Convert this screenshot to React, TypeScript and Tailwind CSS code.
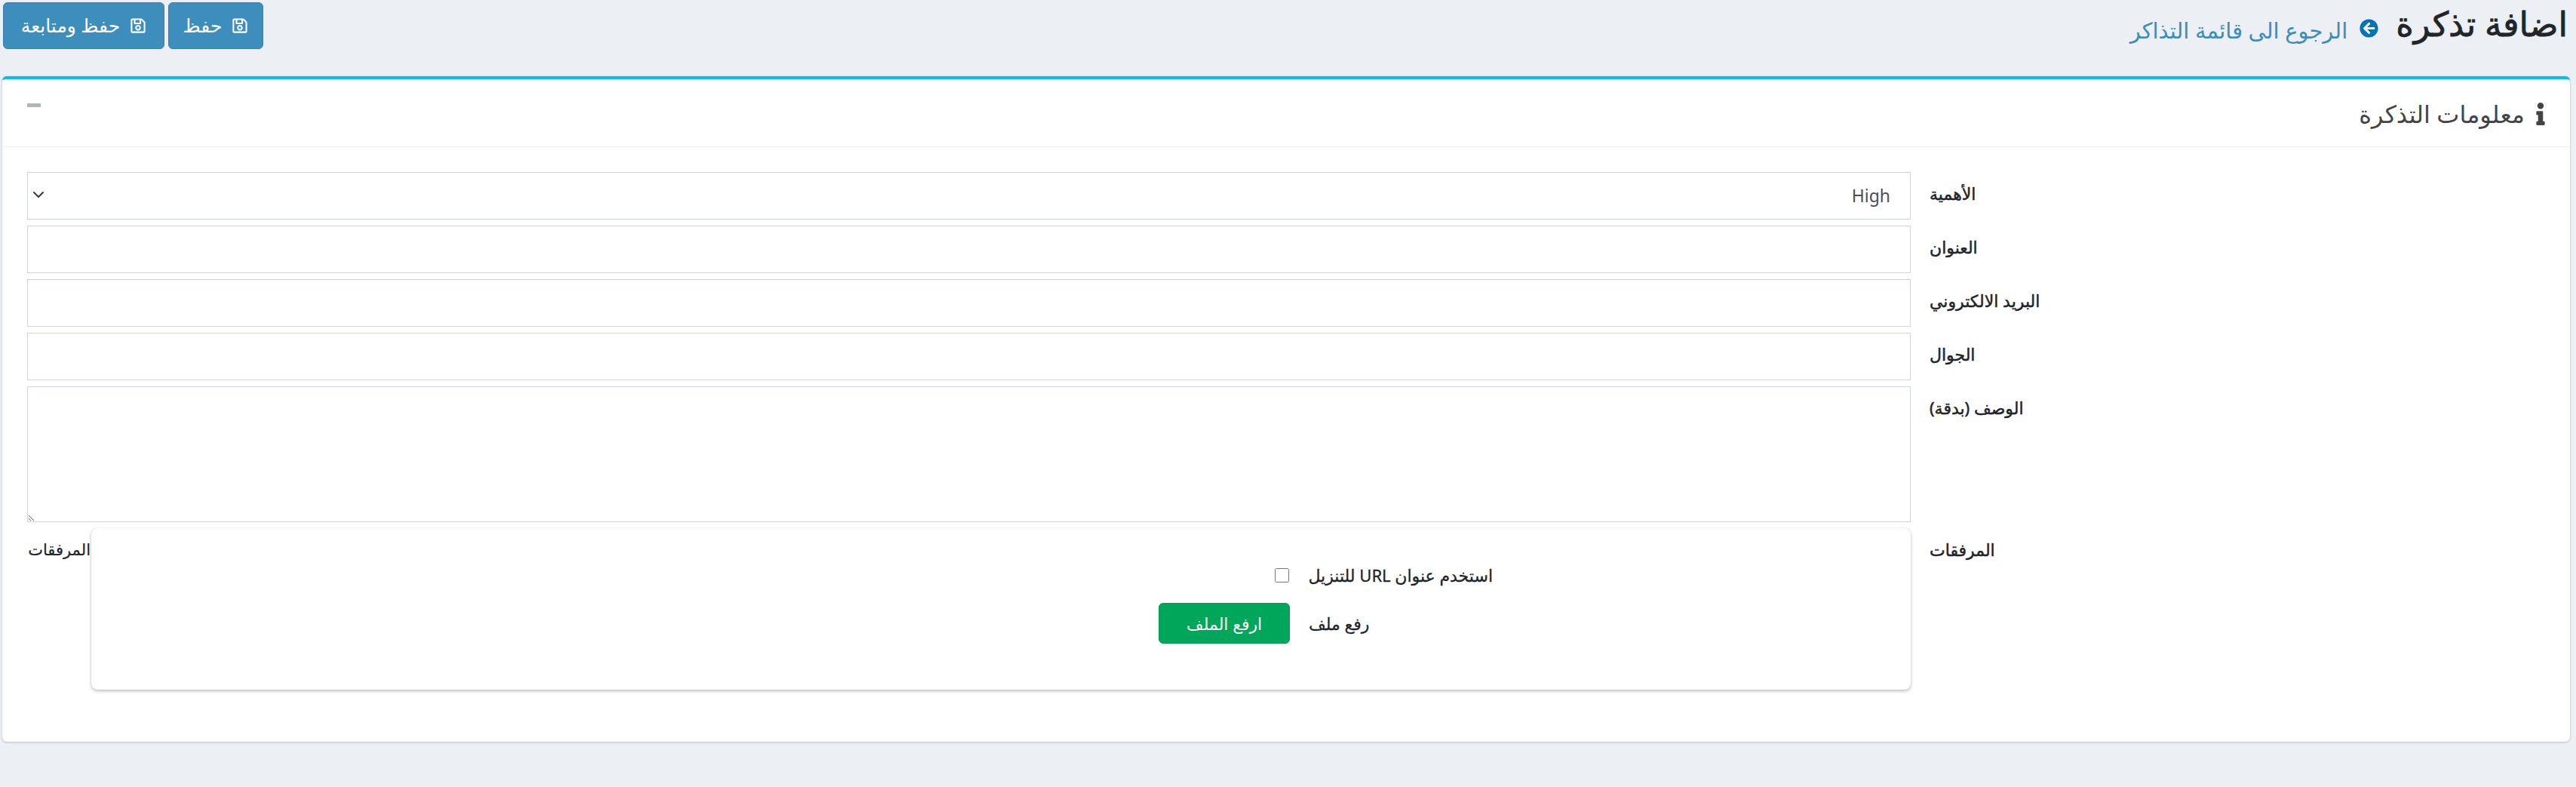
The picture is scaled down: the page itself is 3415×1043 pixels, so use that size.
import { FaArrowCircleLeft, FaInfo, FaRegSave } from "react-icons/fa";

const font = { fontFamily: '"Noto Sans", "Open Sans", "DejaVu Sans", sans-serif' };

function SaveButton({ label, width }: { label: string; width: string }) {
  return (
    <button className={`flex h-[62px] ${width} items-center justify-center gap-[13px] rounded-[6px] border border-[#3a80ab] bg-[#3e8ebd] text-[25px] font-medium text-white`}>
      <FaRegSave className="h-[22px] w-[22px]" />
      <span>{label}</span>
    </button>
  );
}

const labelClass = "w-[849px] shrink-0 pt-[12px] text-left text-[22px] font-normal leading-[32px] text-[#212529] [-webkit-text-stroke:0.5px_#212529]";

function Row({ label, height = "h-[63px]", children }: { label: string; height?: string; children: React.ReactNode }) {
  return (
    <div className="flex items-start">
      <label className={labelClass}>{label}</label>
      <div className={`mr-[25px] w-[2497px] ${height}`}>{children}</div>
    </div>
  );
}

export default function App() {
  const inputClass = "h-full w-full border border-[#ced4da] bg-white px-5 text-[21px] text-[#495057] outline-none";
  return (
    <div dir="rtl" style={font} className="min-h-screen overflow-hidden bg-[#eceff4]">
      <header className="flex h-[101px] items-start justify-between pr-[11px] pl-[4px] pt-[3px]">
        <div className="flex items-start gap-[23px]">
          <h1 className="text-[45px] font-normal leading-[56px] text-[#212529] [-webkit-text-stroke:0.8px_#212529]">اضافة تذكرة</h1>
          <a className="mt-[15px] flex items-center gap-[16px] text-[29px] leading-[44px] text-[#3c8dbc]">
            <FaArrowCircleLeft className="-mt-[6px] h-[25px] w-[25px] text-[#0073b7]" />
            <span>الرجوع الى قائمة التذاكر</span>
          </a>
        </div>
        <div className="flex gap-[5px]">
          <SaveButton label="حفظ" width="w-[126px]" />
          <SaveButton label="حفظ ومتابعة" width="w-[214px]" />
        </div>
      </header>

      <main className="mr-[8px] ml-[3px] h-[882px] rounded-[6px] border-t-4 border-[#00c0ef] bg-white shadow-[0_0_1px_rgba(0,0,0,0.125),0_1px_3px_rgba(0,0,0,0.2)]">
        <div className="flex h-[90px] items-start justify-between border-b border-[#f0f1f3] pr-[32px] pl-[33px]">
          <div className="flex items-center gap-[14px] pt-[25px] text-[#444]">
            <FaInfo className="h-[30px] w-[14px]" />
            <span className="text-[32px] leading-[42px]">معلومات التذكرة</span>
          </div>
          <span className="mt-[32px] h-[5px] w-[18px] rounded-[1px] bg-[#adb5bd]" />
        </div>

        <div className="flex flex-col gap-[8px] pt-[33px]">
          <Row label="الأهمية">
            <div className="relative h-full">
              <select defaultValue="High" className={`${inputClass} appearance-none pr-[26px] text-[23px] font-normal`}>
                <option>High</option>
              </select>
              <svg viewBox="0 0 16 16" className="absolute top-[22px] left-[7px] h-[16px] w-[16px]" fill="none" stroke="#343a40" strokeWidth="2" strokeLinecap="round" strokeLinejoin="round">
                <path d="M2 5l6 6 6-6" />
              </svg>
            </div>
          </Row>
          <Row label="العنوان"><input className={inputClass} /></Row>
          <Row label="البريد الالكتروني"><input className={inputClass} /></Row>
          <Row label="الجوال"><input className={inputClass} /></Row>
          <Row label="الوصف (بدقة)" height="h-[180px]"><textarea className={`${inputClass} block resize-y`} /></Row>

          <div className="flex items-start">
            <label className={labelClass}>المرفقات</label>
            <div className="mr-[25px] flex w-[2497px] items-start">
              <div className="h-[214px] w-[2412px] shrink-0 rounded-[8px] bg-white pt-[43px] pr-[554px] shadow-[0_0_1px_rgba(0,0,0,0.2),0_2px_4px_rgba(0,0,0,0.25)]">
                <div className="flex h-[38px] items-center gap-[26px]">
                  <span className="w-[244px] whitespace-nowrap text-left text-[22px] font-normal text-[#212529] [-webkit-text-stroke:0.3px_#212529]">استخدم عنوان URL للتنزيل</span>
                  <input type="checkbox" className="h-[19px] w-[19px]" />
                </div>
                <div className="mt-[18px] flex items-center gap-[25px]">
                  <span className="w-[244px] text-left text-[22px] font-normal text-[#212529] [-webkit-text-stroke:0.3px_#212529]">رفع ملف</span>
                  <button className="h-[54px] w-[174px] rounded-[6px] border border-[#009c54] bg-[#00a65a] text-[22px] text-white">ارفع الملف</button>
                </div>
              </div>
              <span className="pt-[12px] pr-[1px] text-left text-[21px] font-normal leading-[32px] text-[#212529] [-webkit-text-stroke:0.2px_#212529]">المرفقات</span>
            </div>
          </div>
        </div>
      </main>
    </div>
  );
}
